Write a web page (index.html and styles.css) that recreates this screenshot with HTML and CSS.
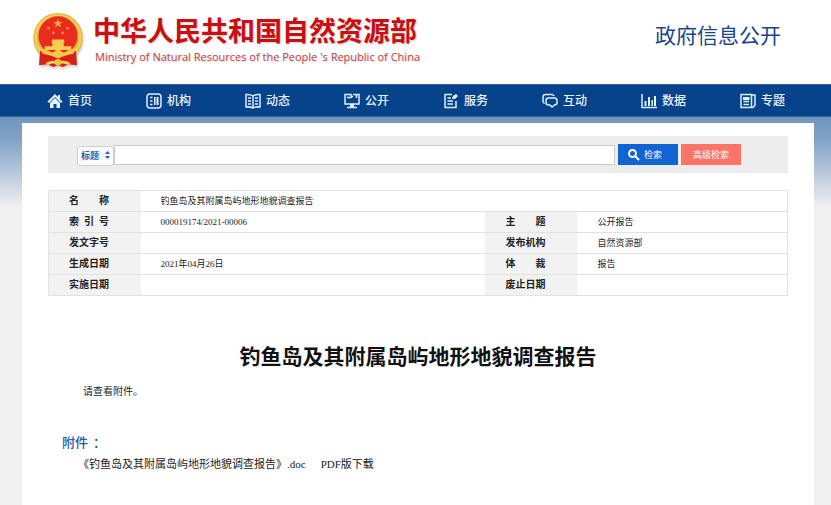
FILE: index.html
```html
<!DOCTYPE html>
<html lang="zh-CN">
<head>
<meta charset="utf-8">
<meta name="viewport" content="width=device-width, initial-scale=1">
<title>钓鱼岛及其附属岛屿地形地貌调查报告</title>
<link rel="stylesheet" href="styles.css">
</head>
<body>
<header class="site-header">
  <a class="brand" href="#">
    <svg class="emblem" viewBox="0 0 54 60" aria-hidden="true">
      <circle cx="27" cy="27" r="26" fill="#e3ae3c"/>
      <circle cx="27" cy="27" r="23.500" fill="none" stroke="#f3cd56" stroke-width="3"/>
      <circle cx="27" cy="25" r="20.500" fill="#e92b20"/>
      <path d="M8 41q10 0 19 7 9-7 19-7l1 15-9-1-6 3-5-2-5 2-6-3-9 1z" fill="#d91f1a"/>
      <path d="m27 7 1.400 3.400h3.600l-2.900 2.300 1.100 3.600-3.200-2.200-3.200 2.200 1.100-3.600-2.900-2.300h3.600z" fill="#f8a83a"/>
      <g fill="#f08a34"><circle cx="17" cy="17" r="1.500"/><circle cx="37" cy="17" r="1.500"/><circle cx="22" cy="22" r="1.500"/><circle cx="32" cy="22" r="1.500"/></g>
      <path d="M21 29h12l1 3h-1v4h8v4H13v-4h8v-4h-1z" fill="#f7cf50"/>
      <path d="M7 38q10 2 14 5l6-4 6 4q4-3 14-5l-4 6q-7 1-16 5-9-4-16-5z" fill="#f5c74a"/>
      <path d="M15 55q6-4 12-1 6-3 12 1" fill="none" stroke="#f6cf55" stroke-width="3"/>
      <circle cx="27" cy="53" r="3.500" fill="#f4c340"/>
    </svg>
    <span class="brand-text">
      <span class="brand-name">中华人民共和国自然资源部</span>
      <span class="brand-en">Ministry of Natural Resources of the People 's Republic of China</span>
    </span>
  </a>
  <span class="section-name">政府信息公开</span>
</header>
<nav class="main-nav">
  <a href="#"><svg viewBox="0 0 16 16" aria-hidden="true"><path class="solid" d="M8 1 .5 8.500 2 10l6-6 6 6 1.500-1.500L13 6V2h-2v2zM3 10l5-5 5 5v5H9.500v-4h-3v4H3z"/></svg>首页</a>
  <a href="#"><svg viewBox="0 0 16 16" aria-hidden="true"><rect x="1" y="1" width="14" height="14" rx="3"/><path d="M4 4.500h2.500M4 8h2.500M4 11.500h2.500"/><path class="solid" d="M8 4h1.500v8H8zM10.500 4h2v8h-2z"/></svg>机构</a>
  <a href="#"><svg viewBox="0 0 16 16" aria-hidden="true"><path d="M8 3Q5 1 1 1.500V14q4-.5 7 1 3-1.500 7-1V1.500Q11 1 8 3zv12M3 5h3M3 8h3M3 11h3M10 5h3M10 8h3M10 11h3"/></svg>动态</a>
  <a href="#"><svg viewBox="0 0 16 16" aria-hidden="true"><path d="M7 3.500V1.500H1V11h14V1.500h-4M3 14.500h10M3 4.500h4l2-1.500M9 1.500h3.500V5"/><path class="solid" d="M6 11h4v4H6z"/></svg>公开</a>
  <a href="#"><svg viewBox="0 0 16 16" aria-hidden="true"><path d="M9 1.500H2v13h11V8M4.500 5H8M4.500 8H10M4.500 11H10"/><path class="solid" d="m9 6 1-3 3-2 2 2-3 3z"/></svg>服务</a>
  <a href="#"><svg viewBox="0 0 16 16" aria-hidden="true"><path d="M2.500 10.500Q1 9.500 1 8V4q0-2.500 2.500-2.500h6q2 0 2.500 1.500M6.500 5h6Q15 5 15 7.500v2q0 2.500-2.500 2.500L10 14l-2-2H6.500Q4 12 4 9.500v-2Q4 5 6.500 5z"/></svg>互动</a>
  <a href="#"><svg viewBox="0 0 16 16" aria-hidden="true"><path d="M1 1v13.500h15"/><path class="solid" d="M3.500 8h2v5h-2zM7 4h2v9H7zM10.500 7h1.500v6h-1.500zM13 3h2v10h-2z"/></svg>数据</a>
  <a href="#"><svg viewBox="0 0 16 16" aria-hidden="true"><path d="M1 1.500h10.500v13H1zM11.500 2H15v10l-2 2.500h-2M3.500 8.500H9M3.500 11.500H9"/><path class="solid" d="M3 4h6.500v3H3z"/></svg>专题</a>
</nav>
<div class="backdrop">
  <main class="sheet">
    <form class="search">
      <span class="field-wrap">
        <select aria-label="检索字段"><option>标题</option></select>
        <svg viewBox="0 0 5 8" aria-hidden="true"><path d="m0 3 2.500-3L5 3zm0 2 2.500 3L5 5z"/></svg>
      </span>
      <input type="text" aria-label="检索词">
      <button class="btn" type="button"><svg viewBox="0 0 12 12" aria-hidden="true"><circle cx="4.500" cy="4.500" r="3.500"/><path d="m7 7 4 4"/></svg>检索</button>
      <button class="btn advanced" type="button">高级检索</button>
    </form>
    <table class="meta">
      <colgroup><col class="key"><col class="wide"><col class="key"><col class="narrow"></colgroup>
      <tbody>
        <tr><th scope="row"><span class="spread"><span>名</span><span>称</span></span></th><td colspan="3">钓鱼岛及其附属岛屿地形地貌调查报告</td></tr>
        <tr><th scope="row"><span class="spread"><span>索</span><span>引</span><span>号</span></span></th><td>000019174/2021-00006</td><th scope="row"><span class="spread"><span>主</span><span>题</span></span></th><td>公开报告</td></tr>
        <tr><th scope="row">发文字号</th><td></td><th scope="row">发布机构</th><td>自然资源部</td></tr>
        <tr><th scope="row">生成日期</th><td>2021年04月26日</td><th scope="row"><span class="spread"><span>体</span><span>裁</span></span></th><td>报告</td></tr>
        <tr><th scope="row">实施日期</th><td></td><th scope="row">废止日期</th><td></td></tr>
      </tbody>
    </table>
    <article>
      <h1>钓鱼岛及其附属岛屿地形地貌调查报告</h1>
      <p class="body-text">请查看附件。</p>
      <h2><span>附件</span><span>：</span></h2>
      <div class="files"><a href="#">《钓鱼岛及其附属岛屿地形地貌调查报告》.doc</a><a href="#">PDF版下载</a></div>
    </article>
  </main>
</div>
</body>
</html>
```
FILE: styles.css
```css
* { box-sizing: border-box; }
body {
  margin: 0;
  min-height: 100vh;
  display: flex;
  flex-direction: column;
  background: #fff;
  color: #222;
  font-family: "Liberation Serif", "Noto Sans CJK SC", serif;
}
a { color: inherit; text-decoration: none; }

.site-header {
  display: flex;
  justify-content: space-between;
  padding: 12px 50px 12px 31px;
  height: 84px;
}
.brand { display: flex; gap: 8px; }
.emblem { width: 54px; height: 57px; filter: drop-shadow(1px 2px 1px #ccc); }
.brand-text { display: flex; flex-direction: column; text-shadow: 1px 1px 2px #ccc; }
.brand-name {
  color: #c90f12;
  font: 700 27px/36px "Noto Sans CJK SC", sans-serif;
}
.brand-en {
  padding-left: 2px;
  color: #bf4444;
  font: 11px/18px "Open Sans", sans-serif;
  white-space: nowrap;
}
.section-name {
  color: #17468a;
  font-size: 21px;
  line-height: 48px;
}

.main-nav {
  display: flex;
  justify-content: space-between;
  align-items: center;
  height: 33px;
  padding: 0 46px 0 47px;
  background: #07438b;
  border-top: 1px solid #2a5d9b;
  border-bottom: 1px solid #2c619c;
  color: #e8f3ff;
}
.main-nav a {
  display: flex;
  align-items: center;
  gap: 5px;
  font-size: 12px;
  font-weight: 500;
  line-height: 16px;
}
.main-nav svg { width: 16px; height: 16px; fill: none; stroke: #d9edff; stroke-width: 1.5; }
.main-nav .solid { fill: #e4f2ff; stroke: none; }

.backdrop {
  flex: 1;
  display: flex;
  padding: 6px 17px 0 22px;
  background: #f0f0f0 linear-gradient(#7197bf 0, #7e9fc6 20px, #b7c7dc 55px, #f0f0f0 90px) no-repeat 0 0 / 100% 90px;
}
.sheet { flex: 1; padding: 13px 26px 0; background: #fff; }

.search {
  display: flex;
  align-items: center;
  height: 37px;
  padding: 0 47px 0 29px;
  background: #ededed;
}
.field-wrap {
  position: relative;
  width: 37px;
  height: 20px;
}
.field-wrap select {
  width: 100%;
  height: 100%;
  padding: 0 3px;
  appearance: none;
  border: 1px solid #d0d0d0;
  border-radius: 3px;
  background: #fafafa;
  color: #1768b5;
  font: 700 9px/16px "Noto Sans CJK SC", sans-serif;
}
.field-wrap svg {
  position: absolute;
  right: 4px;
  top: 6px;
  width: 5px;
  height: 8px;
  fill: #1768b5;
  pointer-events: none;
}
.search input {
  flex: 1;
  min-width: 0;
  height: 20px;
  margin-right: 3px;
  border: 1px solid #c9c9c9;
  background: #fff;
}
.btn {
  display: flex;
  align-items: center;
  justify-content: center;
  gap: 4px;
  width: 60px;
  height: 21px;
  padding: 0 6px 0 0;
  border: 0;
  background: #1065d2;
  color: #fff;
  font: 9px/16px "Noto Sans CJK SC", sans-serif;
}
.btn svg { width: 12px; height: 12px; fill: none; stroke: #fff; stroke-width: 2; }
.btn.advanced { margin-left: 3px; padding: 0; background: #fa7567; }

.meta {
  width: 100%;
  margin-top: 17px;
  table-layout: fixed;
  border-collapse: collapse;
  border: 1px solid #e2e2e2;
}
.meta .key { width: 92px; }
.meta .narrow { width: 210px; }
.meta th, .meta td {
  height: 21px;
  padding: 0 20px;
  border-top: 1px solid #e2e2e2;
  text-align: left;
  font-size: 9px;
  line-height: 16px;
}
.meta th { background: #f2f2f2; font-size: 10px; font-weight: 700; }
.spread { display: flex; justify-content: space-between; width: 40px; }

h1 {
  margin: 42px 0 0;
  color: #111;
  text-align: center;
  font: 700 21px/34px "Noto Sans CJK SC", sans-serif;
}
.body-text {
  margin: 12px 0 0 35px;
  font-size: 10px;
  line-height: 16px;
}
h2 {
  display: flex;
  gap: 5px;
  margin: 32px 0 0 14px;
  color: #2459ae;
  font: 500 13px/20px "Noto Sans CJK SC", sans-serif;
}
.files {
  display: flex;
  gap: 15px;
  margin: 4px 0 0 30px;
  font-size: 11px;
  line-height: 16px;
}
```
